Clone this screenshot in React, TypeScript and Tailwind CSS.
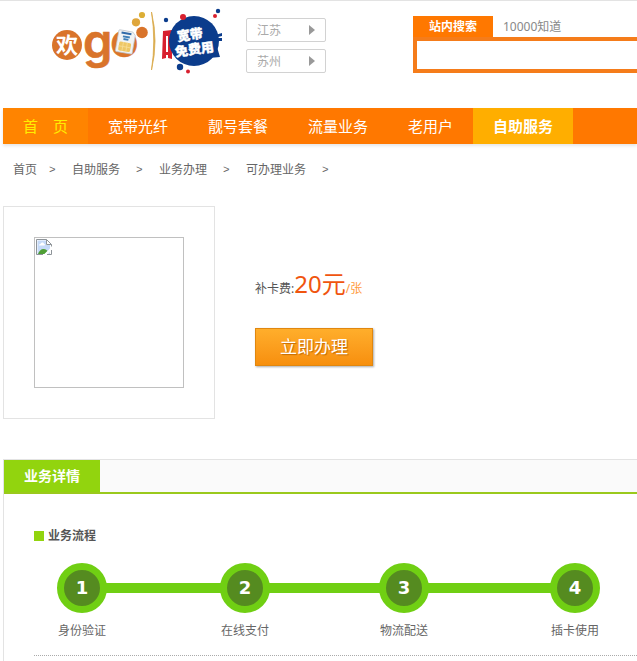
import React, { useState } from "react";

interface NavItem {
  label: string;
  className: string;
}

interface Step {
  label: string;
  line: string;
}

const navItems: NavItem[] = [
  { label: "首　页", className: "bg-[#ff8400] text-[#ffee00]" },
  { label: "宽带光纤", className: "text-white" },
  { label: "靓号套餐", className: "text-white" },
  { label: "流量业务", className: "text-white" },
  { label: "老用户", className: "text-white" },
  { label: "自助服务", className: "bg-[#ffae00] text-white font-bold" },
];

const crumbs: string[] = ["首页", "自助服务", "业务办理", "可办理业务"];

// line is the width of the connector that follows the step
const steps: Step[] = [
  { label: "身份验证", line: "w-[115px]" },
  { label: "在线支付", line: "w-[111px]" },
  { label: "物流配送", line: "w-[123px]" },
  { label: "插卡使用", line: "" },
];

const Logo: React.FC = () => {
  return (
    <svg
      width="180"
      height="74"
      viewBox="48 4 180 74"
      role="img"
      aria-label="欢go 宽带免费用"
      className="shrink-0"
    >
      <circle cx="67" cy="45" r="15" fill="#d9742b" />
      <text x="56" y="53" fontSize="22" fontWeight="700" fill="#fff">
        欢
      </text>
      <g
        fill="#d9742b"
        stroke="#d9742b"
        strokeWidth=".6"
        fontFamily="Inter, sans-serif"
        fontWeight="600"
        fontSize="47"
      >
        <text x="83" y="58">
          g
        </text>
        <text x="110" y="57">
          o
        </text>
      </g>
      <g transform="rotate(10 126 42)">
        <path
          d="M118 31h13l3 3v18a1 1 0 0 1-1 1h-15a1 1 0 0 1-1-1V32a1 1 0 0 1 1-1z"
          fill="#f1f3f4"
          stroke="#b9c3cc"
          strokeWidth=".7"
        />
        <path d="M120 32.500h10v2h-10z" fill="#2f69a8" />
        <path d="M122 36h7v2h-7zM123 38.500h5v2h-5z" fill="#3f7fb8" />
        <rect x="119.500" y="42.500" width="12" height="9" rx="1.500" fill="#eec765" />
        <path
          d="M119.500 47h12M123.500 42.500v9M127.500 42.500v9"
          stroke="#f7dc95"
          strokeWidth=".8"
        />
      </g>
      <circle cx="142" cy="32.500" r="5.800" fill="#d9742b" />
      <circle cx="136" cy="22.300" r="4.100" fill="#dfa63c" />
      <circle cx="142" cy="15" r="3.100" fill="#dcae36" />
      <path
        d="M151.500 12Q158.500 41 151.500 70Q156 41 151.500 12z"
        fill="#d9aa4a"
        stroke="#d9aa4a"
        strokeWidth=".8"
      />
      <path d="M163 31l9-1v29l-4-1v-3h-2v3l-4 1z" fill="#d8202f" />
      <path d="M166 36h2v16h-2z" fill="#fff" />
      <path
        d="M212 36l10-3v3l-4 1v1h4v3h-5v6l3 10-22 2z"
        fill="#0b3c8c"
      />
      <circle cx="194" cy="41" r="25" fill="#0b3c8c" />
      <circle cx="166" cy="20" r="2.200" fill="#0b3c8c" />
      <circle cx="183" cy="17" r="3" fill="#d8202f" />
      <circle cx="215" cy="16" r="2" fill="#d8202f" />
      <circle cx="218" cy="11" r="2.200" fill="#0b3c8c" />
      <circle cx="180" cy="67" r="3.200" fill="#0b3c8c" />
      <circle cx="188" cy="71.500" r="2" fill="#d8202f" />
      <g
        fill="#fff"
        stroke="#fff"
        strokeWidth=".4"
        fontWeight="900"
        transform="rotate(-8 194 42)"
      >
        <text x="178" y="39" fontSize="13">
          宽带
        </text>
        <text x="174" y="54" fontSize="13">
          免费用
        </text>
      </g>
    </svg>
  );
};

const AreaSelect: React.FC<{ label: string; value: string }> = ({
  label,
  value,
}) => {
  return (
    <div className="relative">
      <select
        aria-label={label}
        className="block h-6 w-20 appearance-none rounded-xs border border-[#d2d2d2] bg-white pl-[10px] text-xs leading-6 text-[#aaa]"
      >
        <option>{value}</option>
      </select>
      <svg
        width="6"
        height="10"
        viewBox="0 0 6 10"
        className="pointer-events-none absolute top-[7px] right-[11px]"
      >
        <path d="M0 0l6 5-6 5z" fill="#999" />
      </svg>
    </div>
  );
};

const SearchBox: React.FC = () => {
  const [keyword, setKeyword] = useState("");

  return (
    <div className="min-w-0 flex-1">
      <div className="flex h-[21px] text-xs leading-5">
        <button type="button" className="w-20 bg-[#ff7800] font-bold text-white">
          站内搜索
        </button>
        <button type="button" className="px-[10px] text-[#888]">
          10000知道
        </button>
      </div>
      <input
        type="text"
        aria-label="站内搜索"
        className="block h-9 w-full border-4 border-r-0 border-[#f57c1a] bg-white px-2 text-sm outline-none"
        value={keyword}
        onChange={(e) => setKeyword(e.target.value)}
      />
    </div>
  );
};

const BrokenPicture: React.FC = () => {
  return (
    <div
      role="img"
      aria-label="补卡"
      className="h-[151px] w-[150px] border border-[#c0c0c0] p-px"
    >
      <svg width="16" height="16" viewBox="0 0 16 16">
        <path d="M.5.500h10l5 5v10H.5z" fill="#fff" />
        <path d="M1.500 1.500h8.500V6h4v9H1.500z" fill="#c5daf8" />
        <path
          d="M3 6.500C3 5 4 5 4.500 5 5 3 8 3 8 5c1.500 0 1.500 1.500 0 1.500z"
          fill="#fff"
        />
        <path d="M2 15c1-3 3-5 5.500-5s3 1 4 2l-3 3z" fill="#4f9f35" />
        <path d="M16 7.500L7.500 16h3.500l5-5z" fill="#fff" />
        <path
          d="M7 15.500H.5V.5h10l5 5v2M10.500.500v5h5M11 15.500h4.500V11"
          fill="none"
          stroke="#8e9499"
        />
      </svg>
    </div>
  );
};

const App: React.FC = () => {
  return (
    <div className="overflow-x-hidden border-t border-[#e3e3e3] bg-white font-['Noto_Sans','Noto_Sans_CJK_SC',sans-serif] text-xs text-[#555]">
      <header className="flex h-[107px] items-start pl-12">
        <div className="pt-[3px]">
          <Logo />
        </div>
        <div className="ml-[18px] flex shrink-0 flex-col gap-[7px] pt-[17px]">
          <AreaSelect label="省份" value="江苏" />
          <AreaSelect label="城市" value="苏州" />
        </div>
        <div className="ml-[87px] flex min-w-0 flex-1 pt-[15px]">
          <SearchBox />
        </div>
      </header>

      <div className="pl-[3px]">
        <nav className="flex h-9 bg-[#ff7800] shadow-[0_2px_3px_#e6e6e6]">
          {navItems.map((item) => (
            <a
              key={item.label}
              href="#"
              className={`${item.className} shrink-0 px-5 text-[15px] leading-9 whitespace-pre`}
            >
              {item.label}
            </a>
          ))}
        </nav>

        <div className="flex gap-3 pt-4 pl-[10px] leading-5 text-[#666]">
          {crumbs.map((crumb) => (
            <React.Fragment key={crumb}>
              <a href="#" className="px-1 first:px-0">
                {crumb}
              </a>
              <span className="w-[7px] font-['Liberation_Mono',monospace] text-[11px]">
                &gt;
              </span>
            </React.Fragment>
          ))}
        </div>

        <main>
          <section className="mt-[26px] flex gap-10">
            <div className="shrink-0 border border-[#e3e3e3] p-[30px]">
              <BrokenPicture />
            </div>
            <div className="pt-[62px]">
              <p className="leading-8">
                补卡费:
                <span className="text-2xl leading-8 text-[#f0550f]">20元</span>
                <span className="text-[#ff9a3c]">/张</span>
              </p>
              <button
                type="button"
                className="mt-[23px] h-[38px] w-[118px] border border-[#e0870f] bg-linear-to-b from-[#ffae2b] to-[#f78f0c] text-[17px] leading-8 text-white shadow-[1px_1px_2px_#aaa] text-shadow-[1px_1px_1px_#c46a00]"
              >
                立即办理
              </button>
            </div>
          </section>

          <section className="mt-10 border-t border-l border-[#e3e3e3]">
            <div className="flex h-[34px] border-b-2 border-[#9ac91c] bg-[#fafafa]">
              <h2 className="bg-[#92d40e] px-5 text-sm leading-8 font-bold text-white">
                业务详情
              </h2>
            </div>
            <div className="pt-8 pb-[5px] pl-[30px]">
              <h3 className="flex items-center gap-1 leading-5 font-bold">
                <span className="size-[10px] bg-[#92d40e]"></span>
                业务流程
              </h3>
              <ol className="flex border-b border-dotted border-[#aaa] pt-[17px] pb-[14px] pl-[23px]">
                {steps.map((step, i) => (
                  <li key={step.label} className="flex shrink-0">
                    <div className="flex w-[50px] flex-col items-center gap-2">
                      <span className="flex size-[50px] items-center justify-center rounded-full border-[7px] border-[#70cf13] bg-[#558b20] font-['DejaVu_Sans',sans-serif] text-lg font-bold text-white">
                        {i + 1}
                      </span>
                      <span className="leading-5 whitespace-nowrap text-[#666]">
                        {step.label}
                      </span>
                    </div>
                    {step.line && (
                      <span
                        className={`${step.line} -mx-px mt-5 h-[10px] bg-[#70cf13]`}
                      ></span>
                    )}
                  </li>
                ))}
              </ol>
            </div>
          </section>
        </main>
      </div>
    </div>
  );
};

export default App;
